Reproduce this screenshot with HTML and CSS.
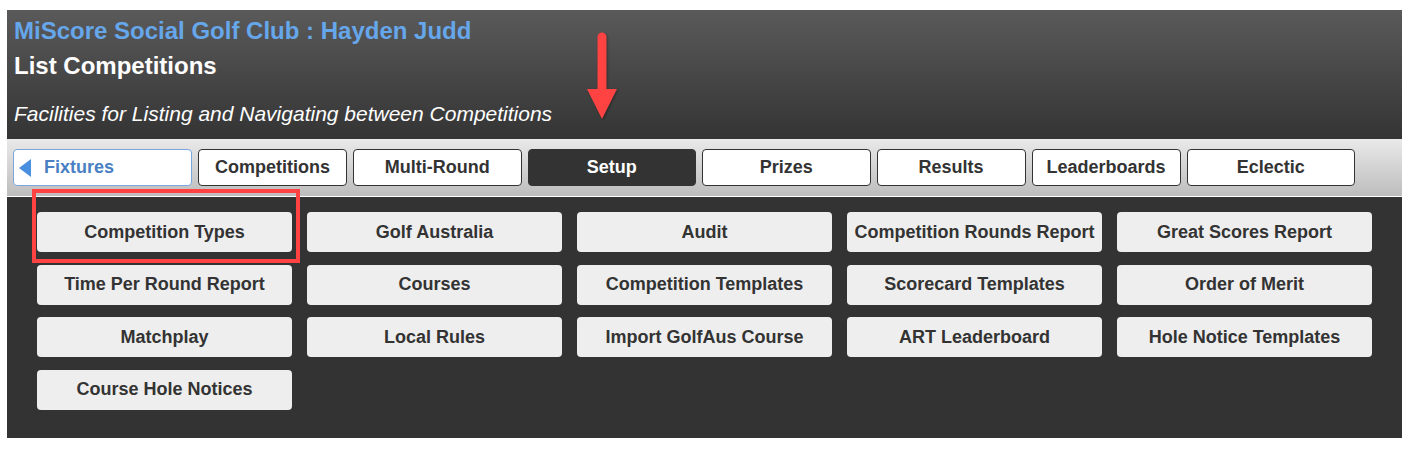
FILE: index.html
```html
<!DOCTYPE html>
<html>
<head>
<meta charset="utf-8">
<link rel="stylesheet" href="styles.css">
</head>
<body>
<div class="panel">
  <header class="header">
    <h1 class="club">MiScore Social Golf Club : Hayden Judd</h1>
    <h2 class="page-title">List Competitions</h2>
    <p class="subtitle">Facilities for Listing and Navigating between Competitions</p>
    <svg class="arrow" width="40" height="96" viewBox="0 0 40 96">
      <line x1="20" y1="7" x2="20" y2="62" stroke="#ff4343" stroke-width="9" stroke-linecap="round"/>
      <polygon points="5,59 35,59 20,89" fill="#ff4343"/>
    </svg>
  </header>
  <nav class="tabs">
    <a class="tab tab-back"><span class="back-tri"></span>Fixtures</a>
    <a class="tab tab-sm">Competitions</a>
    <a class="tab tab-md">Multi-Round</a>
    <a class="tab tab-md tab-active">Setup</a>
    <a class="tab tab-md">Prizes</a>
    <a class="tab tab-sm">Results</a>
    <a class="tab tab-sm">Leaderboards</a>
    <a class="tab tab-md">Eclectic</a>
  </nav>
  <section class="content">
    <div class="grid">
      <a class="btn">Competition Types</a>
      <a class="btn">Golf Australia</a>
      <a class="btn">Audit</a>
      <a class="btn">Competition Rounds Report</a>
      <a class="btn">Great Scores Report</a>
      <a class="btn">Time Per Round Report</a>
      <a class="btn">Courses</a>
      <a class="btn">Competition Templates</a>
      <a class="btn">Scorecard Templates</a>
      <a class="btn">Order of Merit</a>
      <a class="btn">Matchplay</a>
      <a class="btn">Local Rules</a>
      <a class="btn">Import GolfAus Course</a>
      <a class="btn">ART Leaderboard</a>
      <a class="btn">Hole Notice Templates</a>
      <a class="btn">Course Hole Notices</a>
    </div>
  </section>
  <div class="highlight"></div>
</div>
</body>
</html>
```
FILE: styles.css
```css
html, body {
  margin: 0;
  padding: 0;
  background: #fff;
}
body {
  font-family: "Liberation Sans", Arial, sans-serif;
}
.panel {
  position: relative;
  margin: 10px 9px 0 7px;
  background: #333;
}
.header {
  position: relative;
  height: 129px;
  padding: 0 7px;
  background: linear-gradient(#5a5a5a, #343434);
  overflow: hidden;
}
.club {
  margin: 0;
  padding-top: 7px;
  font-size: 24px;
  line-height: 28px;
  font-weight: bold;
  color: #66a6ea;
}
.page-title {
  margin: 0;
  padding-top: 7px;
  font-size: 24px;
  line-height: 28px;
  font-weight: bold;
  color: #fff;
}
.subtitle {
  margin: 0;
  padding-top: 21px;
  font-size: 21px;
  line-height: 26px;
  font-style: italic;
  color: #fff;
}
.arrow {
  position: absolute;
  left: 575px;
  top: 20px;
  filter: drop-shadow(1px 1px 1px rgba(0,0,0,0.35));
}
.tabs {
  display: flex;
  gap: 6px;
  padding: 10px 6px;
  background: linear-gradient(#e9e9e9, #bdbdbd);
  border-bottom: 1px solid #fff;
}
.tab {
  box-sizing: border-box;
  flex: none;
  height: 37px;
  display: flex;
  align-items: center;
  justify-content: center;
  background: #fff;
  border: 1px solid #333;
  border-radius: 4px;
  font-size: 18px;
  font-weight: bold;
  color: #333;
}
.tab-sm { width: 149px; }
.tab-md { width: 168.5px; }
.tab-active {
  background: #333;
  color: #fff;
}
.tab-back {
  width: 179px;
  justify-content: flex-start;
  padding-left: 5px;
  border-color: #7aa6dc;
  color: #4a7fc4;
}
.back-tri {
  width: 0;
  height: 0;
  border-top: 9px solid transparent;
  border-bottom: 9px solid transparent;
  border-right: 12px solid #4a8ee0;
  margin-right: 13px;
}
.content {
  padding: 15px 30px 28px;
}
.grid {
  display: grid;
  grid-template-columns: repeat(5, 255px);
  column-gap: 15px;
  row-gap: 12.5px;
}
.btn {
  height: 40px;
  display: flex;
  align-items: center;
  justify-content: center;
  background: #eee;
  border-radius: 4px;
  font-size: 18px;
  font-weight: bold;
  color: #333;
}
.highlight {
  position: absolute;
  left: 25px;
  top: 179px;
  width: 260px;
  height: 66px;
  border: 4px solid #ff4343;
}
```
